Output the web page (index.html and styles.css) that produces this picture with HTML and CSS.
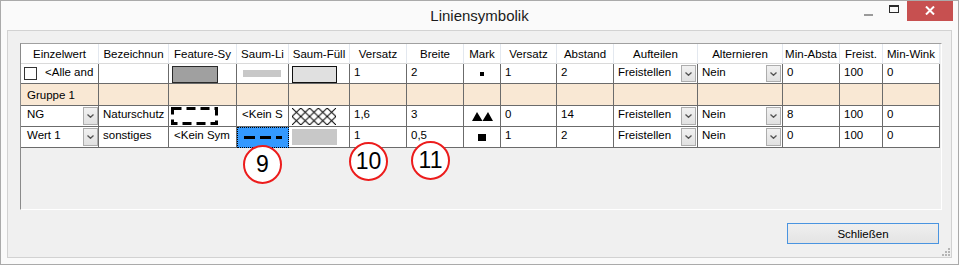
FILE: index.html
```html
<!DOCTYPE html>
<html lang="de">
<head>
  <meta charset="UTF-8" />
  <meta name="viewport" content="width=device-width, initial-scale=1.0" />
  <title>Liniensymbolik</title>
  <link rel="stylesheet" href="styles.css">
</head>
<body>
  <div class="window">
    <div class="titlebar">
      <span></span>
      <span class="title">Liniensymbolik</span>
      <div class="controls">
        <span class="ctl min"><i></i></span>
        <span class="ctl max"><i></i></span>
        <span class="ctl close">
          <svg width="10" height="9" viewBox="0 0 10 9"><path d="M1 0.5 L9 8.5 M9 0.5 L1 8.5" stroke="#fff" stroke-width="2"/></svg>
        </span>
      </div>
    </div>

    <div class="client">
      <div class="grid">
        <!-- header -->
        <div class="cell head">Einzelwert</div>
        <div class="cell head">Bezeichnun</div>
        <div class="cell head">Feature-Sy</div>
        <div class="cell head">Saum-Li</div>
        <div class="cell head">Saum-Füll</div>
        <div class="cell head">Versatz</div>
        <div class="cell head">Breite</div>
        <div class="cell head">Mark</div>
        <div class="cell head">Versatz</div>
        <div class="cell head">Abstand</div>
        <div class="cell head">Aufteilen</div>
        <div class="cell head">Alternieren</div>
        <div class="cell head">Min-Absta</div>
        <div class="cell head">Freist.</div>
        <div class="cell head">Min-Wink</div>

        <!-- alle anderen -->
        <div class="cell"><span class="check"></span><span class="all">&lt;Alle and</span></div>
        <div class="cell"></div>
        <div class="cell gfx"><span class="sym-fill"></span></div>
        <div class="cell gfx"><span class="sym-bar"></span></div>
        <div class="cell gfx"><span class="sym-light"></span></div>
        <div class="cell">1</div>
        <div class="cell">2</div>
        <div class="cell gfx mid"><span class="mark-dot"></span></div>
        <div class="cell">1</div>
        <div class="cell">2</div>
        <div class="cell dd"><span>Freistellen</span><span class="btn"><svg width="7" height="4" viewBox="0 0 7 4"><polyline points="0.5,0.5 3.5,3.3 6.5,0.5" fill="none" stroke="#555" stroke-width="1.3"/></svg></span></div>
        <div class="cell dd"><span>Nein</span><span class="btn"><svg width="7" height="4" viewBox="0 0 7 4"><polyline points="0.5,0.5 3.5,3.3 6.5,0.5" fill="none" stroke="#555" stroke-width="1.3"/></svg></span></div>
        <div class="cell">0</div>
        <div class="cell">100</div>
        <div class="cell">0</div>

        <!-- gruppe -->
        <div class="cell group">Gruppe 1</div>
        <div class="cell group"></div>
        <div class="cell group"></div>
        <div class="cell group"></div>
        <div class="cell group"></div>
        <div class="cell group"></div>
        <div class="cell group"></div>
        <div class="cell group"></div>
        <div class="cell group"></div>
        <div class="cell group"></div>
        <div class="cell group"></div>
        <div class="cell group"></div>
        <div class="cell group"></div>
        <div class="cell group"></div>
        <div class="cell group"></div>

        <!-- NG -->
        <div class="cell dd first"><span>NG</span><span class="btn"><svg width="7" height="4" viewBox="0 0 7 4"><polyline points="0.5,0.5 3.5,3.3 6.5,0.5" fill="none" stroke="#555" stroke-width="1.3"/></svg></span></div>
        <div class="cell">Naturschutz</div>
        <div class="cell gfx tight">
          <svg width="47" height="18" viewBox="0 0 47 18"><rect x="1.5" y="1.5" width="44" height="15" fill="#fff" stroke="#000" stroke-width="3" stroke-dasharray="9 5"/></svg>
        </div>
        <div class="cell indent">&lt;Kein S</div>
        <div class="cell gfx">
          <svg width="44" height="17" viewBox="0 0 44 17">
            <defs>
              <pattern id="hatch" width="8.8" height="8.5" patternUnits="userSpaceOnUse">
                <path d="M0 0 L8.8 8.5 M8.8 0 L0 8.5" stroke="#000" stroke-width="1"/>
              </pattern>
            </defs>
            <rect width="44" height="17" fill="url(#hatch)"/>
          </svg>
        </div>
        <div class="cell">1,6</div>
        <div class="cell">3</div>
        <div class="cell gfx mid">
          <svg width="21" height="9" viewBox="0 0 21 9"><path d="M0 9 L5 0 L10.5 9 Z M10.5 9 L16 0 L21 9 Z" fill="#000"/></svg>
        </div>
        <div class="cell">0</div>
        <div class="cell">14</div>
        <div class="cell dd"><span>Freistellen</span><span class="btn"><svg width="7" height="4" viewBox="0 0 7 4"><polyline points="0.5,0.5 3.5,3.3 6.5,0.5" fill="none" stroke="#555" stroke-width="1.3"/></svg></span></div>
        <div class="cell dd"><span>Nein</span><span class="btn"><svg width="7" height="4" viewBox="0 0 7 4"><polyline points="0.5,0.5 3.5,3.3 6.5,0.5" fill="none" stroke="#555" stroke-width="1.3"/></svg></span></div>
        <div class="cell">8</div>
        <div class="cell">100</div>
        <div class="cell">0</div>

        <!-- Wert 1 -->
        <div class="cell dd first"><span>Wert 1</span><span class="btn"><svg width="7" height="4" viewBox="0 0 7 4"><polyline points="0.5,0.5 3.5,3.3 6.5,0.5" fill="none" stroke="#555" stroke-width="1.3"/></svg></span></div>
        <div class="cell">sonstiges</div>
        <div class="cell indent">&lt;Kein Sym</div>
        <div class="cell sel">
          <svg width="38" height="3" viewBox="0 0 38 3"><line x1="0" y1="1.5" x2="38" y2="1.5" stroke="#000" stroke-width="3" stroke-dasharray="11 5"/></svg>
        </div>
        <div class="cell gfx"><span class="sym-grey"></span></div>
        <div class="cell">1</div>
        <div class="cell">0,5</div>
        <div class="cell gfx mid"><span class="mark-square"></span></div>
        <div class="cell">1</div>
        <div class="cell">2</div>
        <div class="cell dd"><span>Freistellen</span><span class="btn"><svg width="7" height="4" viewBox="0 0 7 4"><polyline points="0.5,0.5 3.5,3.3 6.5,0.5" fill="none" stroke="#555" stroke-width="1.3"/></svg></span></div>
        <div class="cell dd"><span>Nein</span><span class="btn"><svg width="7" height="4" viewBox="0 0 7 4"><polyline points="0.5,0.5 3.5,3.3 6.5,0.5" fill="none" stroke="#555" stroke-width="1.3"/></svg></span></div>
        <div class="cell">0</div>
        <div class="cell">100</div>
        <div class="cell">0</div>

        <!-- annotation markers -->
        <span class="marker m9">9</span>
        <span class="marker m10">10</span>
        <span class="marker m11">11</span>
      </div>

      <div class="footer">
        <button class="close-btn">Schließen</button>
      </div>

      <svg class="grip" width="9" height="9" viewBox="0 0 9 9">
        <rect x="7" y="1" width="2" height="2" fill="#b5b5b5"/>
        <rect x="4" y="4" width="2" height="2" fill="#b5b5b5"/>
        <rect x="7" y="4" width="2" height="2" fill="#b5b5b5"/>
        <rect x="1" y="7" width="2" height="2" fill="#b5b5b5"/>
        <rect x="4" y="7" width="2" height="2" fill="#b5b5b5"/>
        <rect x="7" y="7" width="2" height="2" fill="#b5b5b5"/>
      </svg>
    </div>
  </div>
</body>
</html>
```

FILE: styles.css
```css
* {
  margin: 0;
  padding: 0;
  box-sizing: border-box;
}

body {
  font-family: 'Liberation Sans', Arial, sans-serif;
  font-size: 11.5px;
  color: #000;
  background: #fff;
}

.window {
  width: 959px;
  height: 265px;
  border: 1px solid #aaa;
  background: #fafafa;
  display: flex;
  flex-direction: column;
}

/* title bar */

.titlebar {
  height: 29px;
  display: grid;
  grid-template-columns: 1fr auto 1fr;
}

.title {
  font-size: 15px;
  line-height: 29px;
  color: #1b1b1b;
}

.controls {
  display: flex;
  justify-content: flex-end;
  align-items: flex-start;
  margin-right: 5px;
}

.ctl {
  height: 20px;
  width: 26px;
  display: flex;
  align-items: center;
  justify-content: center;
}

.min i {
  display: block;
  width: 9px;
  height: 2px;
  margin-top: 7px;
  background: #9a9a9a;
}

.max i {
  display: block;
  width: 10px;
  height: 8px;
  margin-top: -4px;
  border: 1px solid #2b2b2b;
  border-top-width: 2px;
}

.close {
  width: 46px;
  background: #c75050;
}

.close svg {
  margin-top: -1px;
}

/* client area */

.client {
  position: relative;
  height: 228px;
  margin: 0 6px 6px;
  border: 1px solid #d2d2d2;
  background: #f0f0f0;
  padding: 12px 12px 13px 12px;
  display: flex;
  flex-direction: column;
}

.grid {
  position: relative;
  width: 922px;
  height: 167px;
  border: 1px solid #a0a0a0;
  border-left-color: #8a8a8a;
  border-right-color: #fff;
  border-bottom-color: #fff;
  display: grid;
  grid-template-columns: 78px 70px 68px 52px 61px 57px 57px 37px 56px 57px 84px 85px 57px 43px 57px;
  grid-template-rows: 20px 20px 22px 21px 21px;
  align-content: start;
}

.cell {
  display: flex;
  align-items: flex-start;
  padding: 1px 0 0 4px;
  line-height: 14px;
  white-space: nowrap;
  overflow: hidden;
  background: #fff;
  border-right: 1px solid #6b6b6b;
  border-bottom: 1px solid #6b6b6b;
}

.cell.head {
  align-items: center;
  justify-content: center;
  padding: 0;
  border-right-color: #e3e8ef;
  border-bottom-color: #dadada;
}

.cell.group {
  background: #f9e8d4;
  padding-top: 4px;
  padding-left: 6px;
}

.cell.first {
  padding-left: 6px;
}

.cell.indent {
  padding-left: 5px;
}

.check {
  width: 13px;
  height: 13px;
  margin: 2px 0 0 -1px;
  border: 1px solid #333;
  background: #fff;
}

.all {
  margin-left: 8px;
}

/* dropdown cells */

.cell.dd {
  justify-content: space-between;
  padding: 1px 1px 1px 4px;
}

.cell.dd.first {
  padding-left: 6px;
  padding-right: 0;
}

.btn {
  width: 15px;
  align-self: stretch;
  display: flex;
  align-items: center;
  justify-content: center;
  background: linear-gradient(#f1f1f1, #e1e1e1);
  border: 1px solid #adadad;
}

/* symbol cells */

.cell.gfx {
  align-items: center;
  padding: 0 0 0 3px;
}

.cell.gfx.tight {
  padding-left: 2px;
}

.cell.gfx.mid {
  justify-content: center;
  padding: 0;
}

.sym-fill {
  width: 46px;
  height: 17px;
  margin-top: 1px;
  background: #a0a0a0;
  border: 1px solid #2a2a2a;
}

.sym-bar {
  width: 38px;
  height: 7px;
  margin-left: 3px;
  background: #c8c8c8;
}

.sym-light {
  width: 45px;
  height: 17px;
  margin-top: 1px;
  background: #e0e0e0;
  border: 1px solid #111;
}

.sym-grey {
  width: 45px;
  height: 16px;
  background: #c8c8c8;
}

.mark-dot {
  width: 4px;
  height: 4px;
  background: #000;
}

.mark-square {
  width: 8px;
  height: 7px;
  margin-left: -1px;
  background: #000;
}

.cell.sel {
  background: #3399ff;
  border: 1px dotted #000;
  padding: 0;
  align-items: center;
  justify-content: center;
}

/* red annotation circles */

.marker {
  position: absolute;
  width: 39px;
  height: 39px;
  border: 2px solid #ec1c1c;
  border-radius: 50%;
  background: #fff;
  display: flex;
  align-items: center;
  justify-content: center;
  font-size: 23px;
  line-height: 1;
}

.m9 {
  left: 222px;
  top: 101px;
}

.m10 {
  left: 328px;
  top: 98px;
}

.m11 {
  left: 390px;
  top: 97px;
}

/* footer */

.footer {
  margin-top: 13px;
  display: flex;
  justify-content: flex-end;
}

.close-btn {
  width: 152px;
  height: 21px;
  font-family: inherit;
  font-size: 11.5px;
  color: #000;
  background: linear-gradient(#efefef, #e4e4e4);
  border: 1px solid #4a94e0;
}

.grip {
  position: absolute;
  right: 1px;
  bottom: 1px;
}
```
